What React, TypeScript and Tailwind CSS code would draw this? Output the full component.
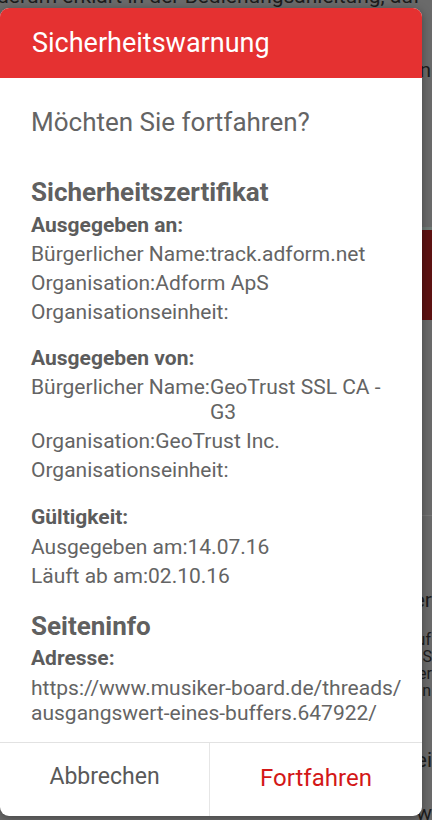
import React from "react";

function Row({ label, value }: { label: string; value: string }) {
  return (
    <div className="flex">
      <span className="shrink-0">{label}</span>
      <span className="flex-1">{value}</span>
    </div>
  );
}

export default function App() {
  return (
    <div
      className="relative w-[432px] h-[820px] overflow-hidden bg-[#6a6a6a]"
      style={{ fontFamily: "Roboto, 'Noto Sans', sans-serif" }}
    >
      {/* dimmed page beneath */}
      <div className="flex flex-col text-[#1c1c1c] text-[21px] leading-[25px]">
        <div className="-mt-[16px] h-[25px] -ml-[3px] whitespace-nowrap">derum erklärt in der Bedienungsanleitung, auf</div>
        <div className="mt-[49px] h-[25px] text-right pr-[1px]">n</div>
        <div className="mt-[144px] h-[93px] bg-[#5e1212] border-t-[3px] border-[#6f7a76]"></div>
        <div className="mt-[195px] h-px bg-[#777777]"></div>
        <div className="mt-[74px] h-[20px] leading-[20px] text-right">er</div>
        <div className="mt-[21px] flex flex-col text-right text-[16px] leading-[17px]">
          <div className="pr-[1px]">uf</div>
          <div>: S</div>
          <div>er</div>
          <div className="pr-[1px]">n</div>
        </div>
        <div className="mt-[51px] h-[20px] leading-[20px] text-right">ei</div>
        <div className="mt-[33px] h-[20px] leading-[20px] text-right">w</div>
      </div>

      {/* dialog */}
      <div className="absolute left-0 top-[8px] w-[422px] h-[808px] rounded-[9px] bg-white overflow-hidden flex flex-col shadow-[0_2px_10px_rgba(0,0,0,0.35)]">
        <div className="h-[70px] shrink-0 bg-[#e53131] flex items-center pl-[32px] pb-[1px]">
          <span className="text-white text-[27px] leading-[30px]">Sicherheitswarnung</span>
        </div>
        <div className="flex-1 flex flex-col pl-[31px] pr-[16px] text-[#646464] text-[21px] leading-[25px]">
          <div className="mt-[29px] text-[26px] leading-[30px]">Möchten Sie fortfahren?</div>
          <div className="mt-[40px] text-[26px] leading-[30px] font-bold text-[#606060]">Sicherheitszertifikat</div>
          <div className="mt-[6px] font-bold text-[#5c5c5c]">Ausgegeben an:</div>
          <div className="mt-[4px] flex flex-col gap-[4px]">
            <div>Bürgerlicher Name:track.adform.net</div>
            <div>Organisation:Adform ApS</div>
            <div>Organisationseinheit:</div>
          </div>
          <div className="mt-[21px] font-bold text-[#5c5c5c]">Ausgegeben von:</div>
          <div className="mt-[4px] flex flex-col gap-[4px]">
            <Row label="Bürgerlicher Name:" value="GeoTrust SSL CA - G3" />
            <div>Organisation:GeoTrust Inc.</div>
            <div>Organisationseinheit:</div>
          </div>
          <div className="mt-[22px] font-bold text-[#5c5c5c]">Gültigkeit:</div>
          <div className="mt-[5px] flex flex-col gap-[4px]">
            <div>Ausgegeben am:14.07.16</div>
            <div>Läuft ab am:02.10.16</div>
          </div>
          <div className="mt-[22px] text-[26px] leading-[30px] font-bold text-[#606060]">Seiteninfo</div>
          <div className="mt-[5px] font-bold text-[#5c5c5c]">Adresse:</div>
          <div className="mt-[5px]">
            <div>https://www.musiker-board.de/threads/</div>
            <div>ausgangswert-eines-buffers.647922/</div>
          </div>
        </div>
        <div className="h-[74px] shrink-0 border-t border-[#e2e2e2] flex">
          <div className="w-[210px] flex items-center justify-center border-r border-[#e6e6e6] text-[#595959] text-[23px] pb-[4px]">
            Abbrechen
          </div>
          <div className="flex-1 flex items-center justify-center text-[#d31717] text-[24px] pb-[4px]">
            Fortfahren
          </div>
        </div>
      </div>
    </div>
  );
}
